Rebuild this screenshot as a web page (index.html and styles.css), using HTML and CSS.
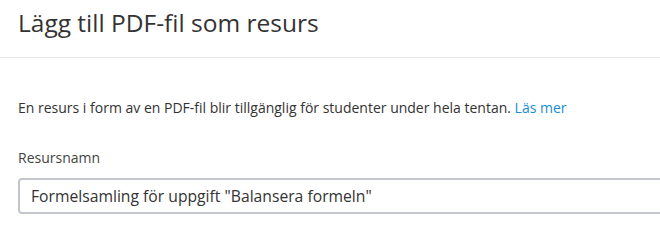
FILE: index.html
```html
<!DOCTYPE html>
<html lang="sv">
<head>
<meta charset="utf-8">
<link rel="stylesheet" href="styles.css">
</head>
<body>
<div class="header">
  <h1 class="title">Lägg till PDF-fil som resurs</h1>
</div>
<div class="content">
  <p class="intro">En resurs i form av en PDF-fil blir tillgänglig för studenter under hela tentan. <a class="link" href="#">Läs mer</a></p>
  <label class="label" for="name">Resursnamn</label>
  <div class="field-wrap">
    <input class="field" id="name" type="text" value="Formelsamling för uppgift &quot;Balansera formeln&quot;">
  </div>
</div>
</body>
</html>
```
FILE: styles.css
```css
* { box-sizing: border-box; }
html, body { margin: 0; padding: 0; background: #fff; }
body {
  font-family: "Open Sans", "Liberation Sans", sans-serif;
  color: #333;
  width: 660px;
  overflow: hidden;
}
.header {
  height: 58px;
  padding: 7px 18px 0;
  border-bottom: 1px solid #e8e8e8;
}
.title {
  margin: 0;
  font-size: 24.5px;
  font-weight: 400;
  line-height: 32px;
  color: #333;
}
.content {
  padding: 0 0 0 18px;
  overflow: hidden;
}
.intro {
  margin: 40px 0 0;
  font-size: 14px;
  line-height: 20px;
  color: #333;
}
.link {
  color: #1b8ccf;
  text-decoration: none;
}
.label {
  display: block;
  margin-top: 30px;
  font-size: 14px;
  line-height: 20px;
  color: #444;
}
.field-wrap {
  margin-top: 10px;
  margin-right: -6px;
}
.field {
  display: block;
  width: 100%;
  height: 36px;
  padding: 0 11px;
  border: 2px solid #c2c5c9;
  border-radius: 4px;
  font-family: "Open Sans", "Liberation Sans", sans-serif;
  font-size: 15.7px;
  color: #333;
  background: #fff;
  outline: none;
}
```
